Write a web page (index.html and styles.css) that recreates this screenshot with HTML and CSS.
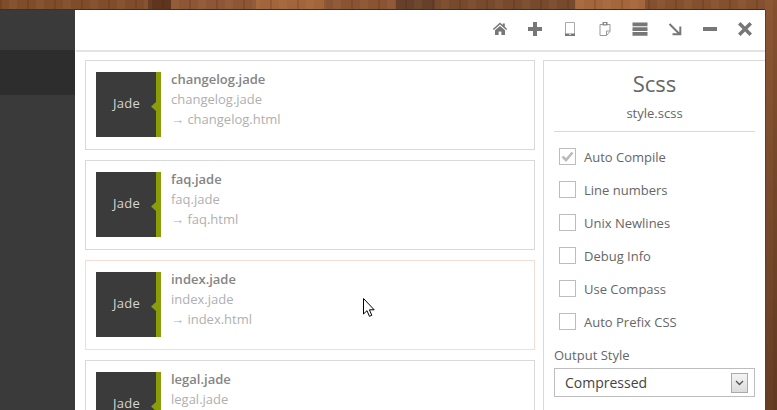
FILE: index.html
```html
<!DOCTYPE html>
<html lang="en">
<head>
<meta charset="utf-8">
<title>Jade</title>
<link rel="stylesheet" href="styles.css">
</head>
<body>
<div class="app">
  <aside class="sidebar"><div class="side-top"></div><div class="side-sel"></div></aside>
  <main class="main">
    <header class="toolbar">
      <svg class="ic" viewBox="0 0 16 16"><path fill="#777" d="M8 1.5 0.8 8l1 1L8 3.6 14.2 9l1-1-2.4-2.2V2.5h-2v1.5zM8 5 3 9.3V14h3.6v-3.4h2.8V14H13V9.3z"/></svg>
      <svg class="ic" viewBox="0 0 16 16"><path fill="#777" d="M6 1h4v5h5v4h-5v5H6v-5H1V6h5z"/></svg>
      <svg class="ic" viewBox="0 0 16 16"><path fill="none" stroke="#aaa" d="M3.500 1.500h9v13h-9z"/><path fill="#777" d="M3 12.500h10V15H3z"/><path fill="#ddd" d="M7 13h2v1H7z"/></svg>
      <svg class="ic" viewBox="0 0 16 16"><path fill="none" stroke="#999" stroke-width="1" d="M3 3.500h10v7l-3.500 4H3z"/><path fill="#888" d="M5.500 1h5v3.500h-5z"/><path fill="#fff" d="M7 2h2v1.200H7z"/><path fill="none" stroke="#999" d="M13 10H9.500v4.500"/></svg>
      <svg class="ic" viewBox="0 0 16 16"><path fill="#777" d="M0.500 1.500h15v3.800h-15zM0.500 6.300h15v3.800h-15zM0.500 11h15v3.800h-15z"/></svg>
      <svg class="ic" viewBox="0 0 16 16"><path fill="none" stroke="#777" stroke-width="2" d="M2.500 3 12.500 13M5.500 13.300h7.800V5.500"/></svg>
      <svg class="ic" viewBox="0 0 16 16"><path fill="#777" d="M1 6h14v4H1z"/></svg>
      <svg class="ic" viewBox="0 0 16 16"><path fill="#777" d="M3.500 1 8 5.500 12.500 1 15 3.500 10.500 8l4.500 4.500L12.500 15 8 10.500 3.500 15 1 12.500 5.500 8 1 3.500z"/></svg>
    </header>
    <div class="content">
      <section class="files">
        <article class="card">
          <div class="thumb"><span class="type">Jade</span></div>
          <div class="info"><div class="name">changelog.jade</div><div class="path">changelog.jade</div><div class="path"><span class="to">→</span> changelog.html</div></div>
        </article>
        <article class="card">
          <div class="thumb"><span class="type">Jade</span></div>
          <div class="info"><div class="name">faq.jade</div><div class="path">faq.jade</div><div class="path"><span class="to">→</span> faq.html</div></div>
        </article>
        <article class="card card-hover">
          <div class="thumb"><span class="type">Jade</span></div>
          <div class="info"><div class="name">index.jade</div><div class="path">index.jade</div><div class="path"><span class="to">→</span> index.html</div></div>
          <svg class="cursor" viewBox="0 0 13 20"><path fill="#fff" stroke="#000" d="M0.500 0.500v15.500l3.500-3.300 2.400 5.600 2.400-1-2.400-5.500h4.800z"/></svg>
        </article>
        <article class="card">
          <div class="thumb"><span class="type">Jade</span></div>
          <div class="info"><div class="name">legal.jade</div><div class="path">legal.jade</div></div>
        </article>
      </section>
      <aside class="panel">
        <h1 class="title">Scss</h1>
        <div class="file">style.scss</div>
        <ul class="opts">
          <li class="opt"><span class="box"><svg class="tick" viewBox="0 0 13 11"><path fill="none" stroke="#bbb" stroke-width="2.600" d="M1.500 5.500 5 9l6.500-7.500"/></svg></span>Auto Compile</li>
          <li class="opt"><span class="box"></span>Line numbers</li>
          <li class="opt"><span class="box"></span>Unix Newlines</li>
          <li class="opt"><span class="box"></span>Debug Info</li>
          <li class="opt"><span class="box"></span>Use Compass</li>
          <li class="opt"><span class="box"></span>Auto Prefix CSS</li>
        </ul>
        <div class="label">Output Style</div>
        <div class="select"><span>Compressed</span><span class="arrow"><svg viewBox="0 0 9 6" class="chev"><path fill="none" stroke="#555" stroke-width="1.400" d="M1 1l3.500 3.500L8 1"/></svg></span></div>
      </aside>
    </div>
  </main>
</div>
</body>
</html>
```
FILE: styles.css
```css
* { box-sizing: border-box; }
html, body { margin: 0; height: 100%; overflow: hidden; }
body {
  width: 777px; height: 410px;
  background-color: #7a4a2a;
  background-image:
    linear-gradient(rgba(0,0,0,0), rgba(30,15,5,.35)),
    repeating-linear-gradient(90deg, rgba(60,25,5,.16) 0 2px, transparent 2px 9px, rgba(255,190,130,.06) 9px 17px, transparent 17px 27px),
    linear-gradient(90deg, #7f4d2c 0 19%, #5f361d 19% 22%, #8e5636 22% 33%, #a2653c 33% 42%, #8a5434 42% 51%, #66402a 51% 56%, #774a2d 56% 74%, #a5663d 74% 83%, #84502f 83% 100%);
  font-family: "Open Sans", "Noto Sans", sans-serif;
}
.app { display: flex; height: 410px; padding: 10px 12px 0 0; }
.sidebar { width: 75px; background: #3a3a3a; box-shadow: 0 -1px 0 #333; flex: none; }
.side-top { height: 40px; }
.side-sel { height: 45px; background: #2d2d2d; }
.main { flex: 1; background: #fff; box-shadow: 0 -1px 0 #333, 1px 0 0 #444; display: flex; flex-direction: column; min-width: 0; }
.toolbar { height: 42px; border-bottom: 2px solid #e3e3e3; margin-left: 1px; display: flex; justify-content: flex-end; align-items: center; gap: 19px; padding: 0 12px 2px 0; flex: none; }
.ic { width: 16px; height: 16px; flex: none; }
.content { flex: 1; display: flex; min-height: 0; padding: 8px 0 0 10px; gap: 8px; }
.files { width: 450px; display: flex; flex-direction: column; gap: 10px; flex: none; }
.card { height: 90px; flex: none; border: 1px solid #d9d9d9; padding: 11px 10px; display: flex; position: relative; }
.card-hover { border-color: #f3ddd4; }
.thumb { width: 65px; height: 65px; background: #3b3b3b; border-right: 5px solid #8a9c08; position: relative; color: #d6d6d6; font-size: 13px; letter-spacing: .25px; text-align: center; flex: none; padding-top: 22px; line-height: 18px; }
.thumb::after { content: ""; position: absolute; right: 0; top: 30px; width: 5px; height: 9px; background: #8a9c08; clip-path: polygon(100% 0, 100% 100%, 0 50%); }
.type { display: block; padding-left: 1px; }
.info { margin-left: 10px; }
.name { font-size: 13px; font-weight: 600; color: #858585; line-height: 16px; margin-top: -1px; margin-bottom: 2px; }
.path { font-size: 13px; color: #b0b0b0; line-height: 20px; }
.to { font-family: "Liberation Sans", sans-serif; }
.cursor { position: absolute; left: 277px; top: 37px; width: 13px; height: 20px; }
.panel { width: 222px; flex: none; border: 1px solid #d9d9d9; border-width: 1px 0 0 1px; padding: 0 10px; color: #666; }
.title { margin: 7px 0 0; font-size: 22px; font-weight: 400; line-height: 30px; text-align: center; color: #666; }
.file { font-size: 13px; text-align: center; line-height: 18px; margin-top: 6px; padding-bottom: 9px; border-bottom: 1px solid #d9d9d9; color: #666; }
.opts { list-style: none; margin: 0; padding: 8px 0 0; }
.opt { display: flex; align-items: center; height: 33px; padding-left: 5px; font-size: 13px; color: #666; }
.box { width: 17px; height: 17px; border: 1px solid #bdbdbd; margin-right: 8px; display: flex; align-items: center; justify-content: center; flex: none; }
.tick { width: 13px; height: 11px; }
.label { font-size: 13px; color: #666; line-height: 18px; margin-top: 8px; }
.select { height: 29px; margin-top: 4px; border: 1px solid #bdbdbd; display: flex; align-items: center; justify-content: space-between; padding: 0 6px 0 10px; font-size: 14px; color: #444; }
.arrow { width: 17px; height: 20px; border: 1px solid #aaa; background: linear-gradient(#f4f4f4, #dcdcdc); display: flex; align-items: center; justify-content: center; }
.chev { width: 9px; height: 6px; }
```
